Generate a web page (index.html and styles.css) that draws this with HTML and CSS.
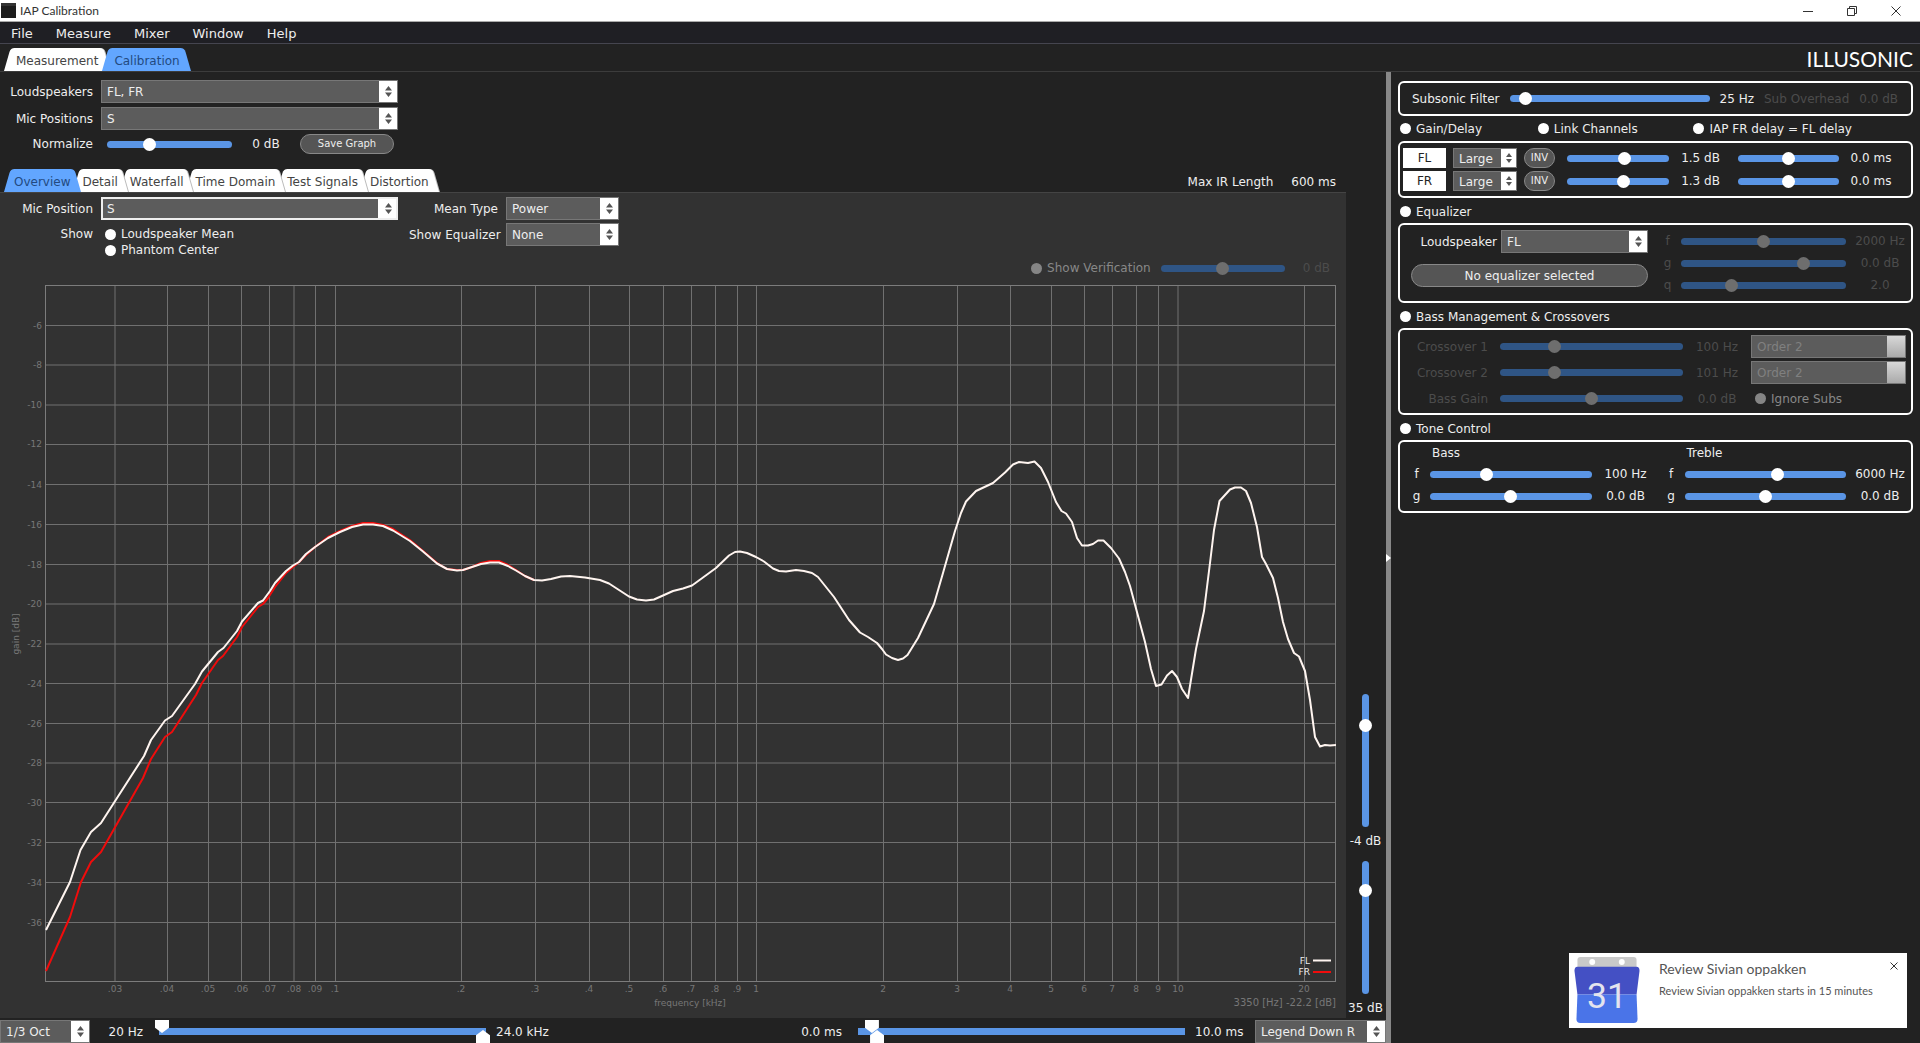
FILE: index.html
```html
<!DOCTYPE html>
<html lang="en">
<head>
  <meta charset="UTF-8">
  <title>IAP Calibration</title>
  <link rel="stylesheet" href="styles.css">
</head>
<body>

<header class="titlebar">
  <span class="app-icon"></span>
  <span class="app-title">IAP Calibration</span>
  <button class="win-btn" aria-label="Minimize"><svg width="10" height="10"><path d="M0 5.5h10"/></svg></button>
  <button class="win-btn" aria-label="Restore"><svg width="10" height="10"><path d="M.5 2.5h7v7h-7zM2.5 2.5v-2h7v7h-2"/></svg></button>
  <button class="win-btn" aria-label="Close"><svg width="10" height="10"><path d="M.5 .5l9 9M9.500 .5l-9 9"/></svg></button>
</header>

<nav class="menubar">
  <a href="#">File</a>
  <a href="#">Measure</a>
  <a href="#">Mixer</a>
  <a href="#">Window</a>
  <a href="#">Help</a>
</nav>

<div class="topbar">
  <div class="tabs">
    <button class="tab">Measurement</button>
    <button class="tab active">Calibration</button>
  </div>
  <span class="brand">ILLUSONIC</span>
</div>

<main class="main">
  <section class="left">
    <div class="setup">
      <label for="speakers">Loudspeakers</label>
      <span class="drop"><select id="speakers"><option>FL, FR</option></select></span>
      <label for="mics">Mic Positions</label>
      <span class="drop"><select id="mics"><option>S</option></select></span>
      <label for="normalize">Normalize</label>
      <div class="normalize">
        <input id="normalize" type="range" min="0" max="100" value="32">
        <span class="value">0 dB</span>
        <button class="pill">Save Graph</button>
      </div>
    </div>

    <div class="subtabs">
      <div class="tabs stacked">
        <button class="tab active">Overview</button>
        <button class="tab">Detail</button>
        <button class="tab">Waterfall</button>
        <button class="tab">Time Domain</button>
        <button class="tab">Test Signals</button>
        <button class="tab">Distortion</button>
      </div>
      <div class="ir-length"><span>Max IR Length</span><span>600 ms</span></div>
    </div>

    <div class="work">
      <div class="overview">
        <div class="options">
          <div class="opt-grid">
            <label for="mic">Mic Position</label>
            <span class="drop focus"><select id="mic"><option>S</option></select></span>
            <span class="opt-label">Show</span>
            <div class="checks">
              <label class="check"><input type="checkbox">Loudspeaker Mean</label>
              <label class="check"><input type="checkbox">Phantom Center</label>
            </div>
          </div>
          <div class="opt-grid narrow">
            <label for="mean">Mean Type</label>
            <span class="drop"><select id="mean"><option>Power</option></select></span>
            <label for="showeq">Show Equalizer</label>
            <span class="drop"><select id="showeq"><option>None</option></select></span>
          </div>
        </div>

        <div class="verify">
          <label class="check off"><input type="checkbox" disabled>Show Verification</label>
          <input type="range" min="0" max="100" value="50" disabled aria-label="Verification gain">
          <span class="dim">0 dB</span>
        </div>

        <svg class="plot" viewBox="0 278 1346 740">
          <!-- grid -->
          <path class="grid" d="M45 325.500H1336M45 365H1336M45 405H1336M45 444.500H1336M45 484.500H1336M45 524.500H1336M45 564.500H1336M45 604H1336M45 644H1336M45 683.500H1336M45 723.500H1336M45 763H1336M45 802.500H1336M45 842.500H1336M45 882.500H1336M45 922.500H1336"/>
          <path class="grid" d="M115 285V981M167.500 285V981M208.500 285V981M241.500 285V981M269.500 285V981M294 285V981M315.500 285V981M335.500 285V981M461.500 285V981M535.500 285V981M589.500 285V981M629.500 285V981M663.500 285V981M691.500 285V981M715.500 285V981M737.500 285V981M756.500 285V981M883.500 285V981M957.500 285V981M1010.500 285V981M1051.500 285V981M1084.500 285V981M1112.500 285V981M1136.500 285V981M1158.500 285V981M1178 285V981M1304.500 285V981"/>
          <rect class="frame" x="45.500" y="285.500" width="1290" height="696"/>

          <!-- responses -->
          <polyline class="fr" points="46,971 70,917 81,882 91,862 101,852 143,778 151,759 165,737 172,732 196,695 202,683 218,660 223,656 237,637 242,627 258,607 263,604 268,598 275,587 286,573 293,567 299,562 306,555 315,547 328,537 340,531 352,526 363,523 373,523 383,525 393,529 410,540 423,551 437,563 447,569 457,570 463,570 472,567 481,563 490,561 499,561 508,565 516,570 525,576 534,580"/>
          <polyline class="fl" points="46,930 70,882 80.5,850 91,832 101,823 144,756 151,740 165,720.5 172,716 195,684 202,671.5 218,652 223.5,648 237,631 242,621.5 258,603 263,600.5 270,591 275,583 286,571 293,565.5 299,562 306,554 315,547 328,538 340,532 352,527 363,524.5 373,524.5 383,526 393,530.5 410,541 423,551.5 437,563.5 447,569 457,570.5 463,570 472,567 481,564 490,562.5 499,562.5 508,566 516,570.5 525,576 534,580 542,580.5 551,579 561,576.5 570,576 585,577.5 600,580 609,583.5 619,590 629,596.5 637,599.5 646,600.5 654,599.5 663,595.5 673,591 683,588.5 692,585.5 703,577.5 716,568 729,555.5 735,552 740,551.5 747,553 756,557 764,561.5 773,568.5 779,571 786,571.5 796,570 804,571 812,573 818,577 834,597 849,620 860,632.5 868,637 877,643 882,649 886,654.5 892,658 898,660 903,658.5 907.5,655 918,638 934,604 943,573 955,531 961,513 966,501.5 976,491 993,483 1005,472.5 1013,464.5 1019,462 1028,463 1034.5,461.5 1041,468 1048,482 1056,502 1061.5,511 1066,513.5 1072,522 1077,538 1082,545.5 1088,545.5 1093,544 1098,540.5 1103.5,540.5 1111,548 1119,558.5 1125,572 1130,586 1145,642 1151,669 1156,686 1161.5,684.5 1167,675.5 1172,671 1177,677 1182,689 1188,698 1196,649 1204,611 1210,563 1214,530 1219.5,501 1230,489.5 1235,487.5 1241,487.5 1246,491 1251,503 1257,527 1262,557 1266,564 1273,578 1278,598 1283,622 1288,639 1294,653 1299,656.5 1305,671 1310,700 1315,737 1320,746.5 1325,745 1330,745.5 1336,745"/>

          <!-- gain axis -->
          <g class="axis" text-anchor="end">
            <text x="42" y="329">-6</text>
            <text x="42" y="368">-8</text>
            <text x="42" y="408">-10</text>
            <text x="42" y="447">-12</text>
            <text x="42" y="488">-14</text>
            <text x="42" y="528">-16</text>
            <text x="42" y="568">-18</text>
            <text x="42" y="607">-20</text>
            <text x="42" y="647">-22</text>
            <text x="42" y="687">-24</text>
            <text x="42" y="727">-26</text>
            <text x="42" y="766">-28</text>
            <text x="42" y="806">-30</text>
            <text x="42" y="846">-32</text>
            <text x="42" y="886">-34</text>
            <text x="42" y="926">-36</text>
          </g>
          <!-- frequency axis -->
          <g class="axis" text-anchor="middle">
            <text x="115" y="992">.03</text>
            <text x="167" y="992">.04</text>
            <text x="208" y="992">.05</text>
            <text x="241" y="992">.06</text>
            <text x="269" y="992">.07</text>
            <text x="294" y="992">.08</text>
            <text x="315" y="992">.09</text>
            <text x="335" y="992">.1</text>
            <text x="461" y="992">.2</text>
            <text x="535" y="992">.3</text>
            <text x="589" y="992">.4</text>
            <text x="629" y="992">.5</text>
            <text x="663" y="992">.6</text>
            <text x="691" y="992">.7</text>
            <text x="715" y="992">.8</text>
            <text x="737" y="992">.9</text>
            <text x="756" y="992">1</text>
            <text x="883" y="992">2</text>
            <text x="957" y="992">3</text>
            <text x="1010" y="992">4</text>
            <text x="1051" y="992">5</text>
            <text x="1084" y="992">6</text>
            <text x="1112" y="992">7</text>
            <text x="1136" y="992">8</text>
            <text x="1158" y="992">9</text>
            <text x="1178" y="992">10</text>
            <text x="1304" y="992">20</text>
            <text x="690" y="1006">frequency [kHz]</text>
            <text transform="translate(19 634) rotate(-90)">gain [dB]</text>
          </g>
          <text class="axis readout" x="1336" y="1006" text-anchor="end">3350 [Hz] -22.2 [dB]</text>

          <!-- legend -->
          <g class="legend" text-anchor="end">
            <text x="1310" y="964">FL</text>
            <text x="1310" y="975">FR</text>
            <path class="fl" d="M1313 960.500h18"/>
            <path class="fr" d="M1313 972h18"/>
          </g>
        </svg>
      </div>

      <div class="side">
        <input class="vert" type="range" min="0" max="100" value="79" aria-label="Top level">
        <span>-4 dB</span>
        <input class="vert" type="range" min="0" max="100" value="81" aria-label="Range">
        <span>35 dB</span>
      </div>
    </div>

    <footer class="bottombar">
      <span class="drop smooth"><select aria-label="Smoothing"><option>1/3 Oct</option></select></span>
      <span class="from">20 Hz</span>
      <div class="span">
        <input class="low" type="range" min="0" max="100" value="0" aria-label="Lowest frequency">
        <input class="high" type="range" min="0" max="100" value="100" aria-label="Highest frequency">
      </div>
      <span class="to">24.0 kHz</span>
      <span class="from time">0.0 ms</span>
      <div class="span">
        <input class="low" type="range" min="0" max="1000" value="34" aria-label="Window start">
        <input class="high" type="range" min="0" max="1000" value="50" aria-label="Window end">
      </div>
      <span class="to">10.0 ms</span>
      <span class="drop legend-pos"><select aria-label="Legend"><option>Legend Down R</option></select></span>
    </footer>
  </section>

  <div class="splitter"></div>

  <aside class="right">
    <div class="box subsonic">
      <label for="subsonic">Subsonic Filter</label>
      <input id="subsonic" type="range" min="0" max="100" value="5">
      <span>25 Hz</span>
      <span class="dim">Sub Overhead</span>
      <span class="dim">0.0 dB</span>
    </div>

    <div class="heading delays">
      <label class="check"><input type="checkbox">Gain/Delay</label>
      <label class="check"><input type="checkbox">Link Channels</label>
      <label class="check"><input type="checkbox">IAP FR delay = FL delay</label>
    </div>
    <div class="box gains">
      <div class="channel">
        <button class="name">FL</button>
        <span class="drop"><select aria-label="FL size"><option>Large</option></select></span>
        <button class="pill">INV</button>
        <input type="range" min="0" max="100" value="58" aria-label="FL gain">
        <span class="value">1.5 dB</span>
        <input type="range" min="0" max="100" value="50" aria-label="FL delay">
        <span class="value">0.0 ms</span>
      </div>
      <div class="channel">
        <button class="name">FR</button>
        <span class="drop"><select aria-label="FR size"><option>Large</option></select></span>
        <button class="pill">INV</button>
        <input type="range" min="0" max="100" value="57" aria-label="FR gain">
        <span class="value">1.3 dB</span>
        <input type="range" min="0" max="100" value="50" aria-label="FR delay">
        <span class="value">0.0 ms</span>
      </div>
    </div>

    <div class="heading">
      <label class="check"><input type="checkbox">Equalizer</label>
    </div>
    <div class="box equalizer">
      <div class="eq-pick">
        <div class="eq-speaker">
          <label for="eqspeaker">Loudspeaker</label>
          <span class="drop"><select id="eqspeaker"><option>FL</option></select></span>
        </div>
        <button class="pill">No equalizer selected</button>
      </div>
      <div class="knobs dim">
        <label for="eqf">f</label>
        <input id="eqf" type="range" min="0" max="100" value="50" disabled>
        <span class="value">2000 Hz</span>
        <label for="eqg">g</label>
        <input id="eqg" type="range" min="0" max="100" value="76" disabled>
        <span class="value">0.0 dB</span>
        <label for="eqq">q</label>
        <input id="eqq" type="range" min="0" max="100" value="29" disabled>
        <span class="value">2.0</span>
      </div>
    </div>

    <div class="heading">
      <label class="check"><input type="checkbox">Bass Management &amp; Crossovers</label>
    </div>
    <div class="box crossovers dim">
      <label for="xo1">Crossover 1</label>
      <input id="xo1" type="range" min="0" max="100" value="28" disabled>
      <span class="value">100 Hz</span>
      <span class="drop off"><select aria-label="Crossover 1 order" disabled><option>Order 2</option></select></span>
      <label for="xo2">Crossover 2</label>
      <input id="xo2" type="range" min="0" max="100" value="28" disabled>
      <span class="value">101 Hz</span>
      <span class="drop off"><select aria-label="Crossover 2 order" disabled><option>Order 2</option></select></span>
      <label for="bassgain">Bass Gain</label>
      <input id="bassgain" type="range" min="0" max="100" value="50" disabled>
      <span class="value">0.0 dB</span>
      <label class="check off"><input type="checkbox" disabled>Ignore Subs</label>
    </div>

    <div class="heading">
      <label class="check"><input type="checkbox">Tone Control</label>
    </div>
    <div class="box tone">
      <div>
        <div class="tone-title">Bass</div>
        <div class="knobs">
          <label for="bassf">f</label>
          <input id="bassf" type="range" min="0" max="100" value="34">
          <span class="value">100 Hz</span>
          <label for="bassg">g</label>
          <input id="bassg" type="range" min="0" max="100" value="50">
          <span class="value">0.0 dB</span>
        </div>
      </div>
      <div>
        <div class="tone-title">Treble</div>
        <div class="knobs">
          <label for="trebf">f</label>
          <input id="trebf" type="range" min="0" max="100" value="58">
          <span class="value">6000 Hz</span>
          <label for="trebg">g</label>
          <input id="trebg" type="range" min="0" max="100" value="50">
          <span class="value">0.0 dB</span>
        </div>
      </div>
    </div>
  </aside>
</main>

<div class="toast">
  <svg class="calendar" width="66" height="67" viewBox="0 0 66 68">
    <path d="M6 0h54a3 3 0 0 1 3 3v10H3V3a3 3 0 0 1 3-3z" fill="#c9c9c9"/>
    <circle cx="18" cy="5" r="3" fill="#fff"/>
    <circle cx="48" cy="5" r="3" fill="#fff"/>
    <path d="M3 10h60q3 0 3 4l-3 24H3L0 14q0-4 3-4z" fill="#4450c4"/>
    <path d="M3 38h60l1 25q0 4-4 4H6q-4 0-4-4z" fill="#4a74e8"/>
    <text x="33" y="52" text-anchor="middle">31</text>
  </svg>
  <div class="toast-text">
    <div class="toast-title">Review Sivian oppakken</div>
    <div>Review Sivian oppakken starts in 15 minutes</div>
  </div>
  <button class="toast-close" aria-label="Close"><svg width="8" height="8"><path d="M.5 .5l7 7M7.500 .5l-7 7"/></svg></button>
</div>

</body>
</html>
```
FILE: styles.css
```css
* { box-sizing: border-box; }
body { margin: 0; min-height: 100vh; display: flex; flex-direction: column; background: #222; color: #eee; font: 12px/16px "DejaVu Sans", Verdana, sans-serif; }
button, select, input { font: inherit; color: inherit; margin: 0; }
button { border: 0; padding: 0; background: none; }
a { color: inherit; text-decoration: none; }

/* window chrome */
.titlebar { display: flex; align-items: center; height: 22px; background: #fff; color: #333; border-bottom: 1px solid #aaa; }
.app-icon { width: 15px; height: 15px; margin: 0 4px 0 1px; background: #1c1c1c; border-top: 3px solid #333; }
.app-title { flex: 1; font: 12px/16px Lato, "Noto Sans", sans-serif; }
.win-btn { width: 44px; height: 20px; display: flex; align-items: center; justify-content: center; }
.win-btn:last-child { margin-right: 2px; }
.win-btn svg, .toast-close svg { fill: none; stroke: #333; }
.menubar { display: flex; align-items: center; gap: 23px; height: 22px; padding: 2px 0 0 11px; background: #1f1f24; border-bottom: 1px solid #45454f; font-size: 13px; }

/* tabs */
.topbar { display: flex; justify-content: space-between; height: 28px; border-bottom: 1px solid #3c3c3c; }
.tabs { display: flex; align-items: flex-end; padding-left: 4px; }
.tab { position: relative; isolation: isolate; height: 23px; padding: 3px 12px 0; color: #444; }
.tab + .tab { margin-left: -8px; }
.tab::before, .tab::after { content: ""; position: absolute; z-index: -1; top: 0; bottom: 0; width: 52%; background: #fff; }
.tab::before { left: 0; border-radius: 4px 0 0 0; transform: skewX(-16deg); transform-origin: bottom; }
.tab::after { right: 0; border-radius: 0 4px 0 0; transform: skewX(16deg); transform-origin: bottom; box-shadow: 1px 0 0 #bbb; }
.tab.active { z-index: 10; color: #234a80; }
.tab.active::before, .tab.active::after { background: #62a6ff; box-shadow: none; }
.stacked .tab { padding: 3px 10px 0; }
.stacked .tab:nth-child(2) { z-index: 5; }
.stacked .tab:nth-child(3) { z-index: 4; }
.stacked .tab:nth-child(4) { z-index: 3; }
.stacked .tab:nth-child(5) { z-index: 2; }
.brand { padding-right: 7px; color: #fff; font: 21px/30px "Liberation Sans Narrow", Lato, sans-serif; }

/* controls */
input[type=range] { appearance: none; width: 100%; min-width: 0; height: 14px; background: none; }
input[type=range]::-webkit-slider-runnable-track { height: 7px; border-radius: 4px; background: #5a95e5; }
input[type=range]::-webkit-slider-thumb { appearance: none; width: 13px; height: 13px; margin-top: -3px; border-radius: 50%; background: #fff; }
input[type=range]:disabled::-webkit-slider-runnable-track { background: #2f5585; }
input[type=range]:disabled::-webkit-slider-thumb { background: #6e6e6e; }
input[type=checkbox] { appearance: none; width: 11px; height: 11px; flex: none; border-radius: 50%; background: #fff; }
input[type=checkbox]:disabled { background: #858585; }
.check { display: flex; align-items: center; gap: 5px; }
.check.off { color: #888; }
.drop { position: relative; display: flex; height: 23px; }
.drop select { appearance: none; flex: 1; min-width: 0; padding: 1px 20px 0 5px; border: 1px solid #777; border-radius: 0; background: linear-gradient(#fff, #fff) right / 18px 100% no-repeat #5c5c5c; color: #eee; opacity: 1; }
.drop::after { content: ""; position: absolute; right: 6px; top: 6px; width: 7px; height: 11px; background: #555; clip-path: polygon(50% 0, 100% 40%, 0 40%, 0 60%, 100% 60%, 50% 100%, 0 60%, 0 40%); pointer-events: none; }
.drop.focus select { border: 2px solid #eee; padding-left: 4px; }
.drop.off::after { display: none; }
.drop.off select { color: #808080; background-image: linear-gradient(#d8d8d8, #aaa); }
.pill { height: 20px; border: 1px solid #888; border-radius: 12px; background: #555; font-size: 10px; }
.dim { color: #4c4c4c; }

/* columns */
.main { flex: 1; display: grid; grid-template-columns: minmax(0, 1fr) 5px 529px; }
.left { display: flex; flex-direction: column; }
.setup { display: grid; grid-template-columns: 93px 297px; grid-template-rows: 23px 23px 20px; gap: 4px 8px; align-items: center; padding-top: 8px; }
.setup > label, .opt-grid > label, .opt-label { text-align: right; white-space: nowrap; }
.normalize { display: flex; align-items: center; padding: 0 4px 0 6px; }
.normalize input[type=range] { width: 125px; }
.normalize .value { width: 68px; text-align: center; }
.normalize .pill { flex: 1; }
.subtabs { display: flex; justify-content: space-between; height: 38px; }
.ir-length { display: flex; gap: 18px; align-items: flex-end; padding: 0 50px 2px 0; }
.work { flex: 1; display: flex; }
.overview { flex: 1; min-width: 0; background: #323232; border-top: 1px solid #444; }
.options { display: flex; gap: 11px; padding-top: 4px; }
.opt-grid { display: grid; grid-template-columns: 93px 297px; gap: 4px 8px; align-content: start; align-items: center; }
.opt-grid.narrow { grid-template-columns: 89px 113px; gap: 3px 8px; }
.opt-label { align-self: start; padding-top: 2px; }
.checks { padding: 2px 0 0 4px; }
.verify { display: flex; align-items: center; gap: 10px; height: 20px; padding-right: 16px; justify-content: flex-end; }
.verify input[type=range] { width: 124px; }
.verify .dim { padding-left: 8px; }

/* plot */
.plot { display: block; width: 100%; height: auto; font-size: 9px; }
.plot .grid { fill: none; stroke: #707070; }
.plot .frame { fill: none; stroke: #7c7c7c; }
.plot .axis { fill: #777; }
.plot .readout { font-size: 10px; }
.plot .legend { fill: #eee; }
.plot .fl, .plot .fr { fill: none; stroke-width: 2; stroke-linejoin: round; }
.plot .fl { stroke: #fff5f0; }
.plot .fr { stroke: #f00c0c; }

.side { width: 39px; margin-right: 1px; display: flex; flex-direction: column; justify-content: flex-end; align-items: center; gap: 6px; padding-bottom: 2px; }
.side span { white-space: nowrap; padding-bottom: 6px; }
.side span:last-child { padding: 0; }
input[type=range].vert { writing-mode: vertical-lr; direction: rtl; width: 14px; height: 133px; }
input.vert::-webkit-slider-runnable-track { width: 7px; height: 100%; }
input.vert::-webkit-slider-thumb { margin: 0 0 0 -3px; }

.bottombar { display: flex; align-items: center; height: 25px; padding-top: 2px; }
.smooth { width: 90px; }
.legend-pos { width: 131px; }
.from { width: 69px; padding-right: 16px; text-align: right; }
.from.time { flex: 1; }
.to { width: 70px; padding-left: 10px; }
/* two-handle slider: both inputs share one grid cell */
.span { display: grid; width: 327px; height: 23px; }
.span input[type=range] { grid-area: 1 / 1; width: auto; height: 23px; margin: 0 -4px; pointer-events: none; }
.span input.low::-webkit-slider-runnable-track { height: 23px; border-radius: 0; background: linear-gradient(#5a95e5, #5a95e5) center / calc(100% - 8px) 7px no-repeat; }
.span input.high::-webkit-slider-runnable-track { height: 23px; background: none; }
.span input::-webkit-slider-thumb { width: 14px; height: 13px; margin-top: 0; border-radius: 0; clip-path: polygon(0 0, 100% 0, 100% 60%, 50% 100%, 0 60%); pointer-events: auto; }
.span .high::-webkit-slider-thumb { margin-top: 10px; clip-path: polygon(50% 0, 100% 40%, 100% 100%, 0 100%, 0 40%); }

.splitter { background: #888; display: flex; align-items: center; }
.splitter::after { content: ""; border: 4px solid transparent; border-left: 5px solid #fff; border-right: 0; }

/* right panel */
.right { padding: 9px 7px; }
.box { border: 2px solid #fff; border-radius: 6px; }
.heading { height: 25px; padding: 2px 2px 0; display: flex; align-items: center; }
.value { text-align: center; white-space: nowrap; }
.subsonic { display: flex; align-items: center; gap: 10px; height: 35px; padding: 0 13px 0 12px; white-space: nowrap; }
.subsonic input { flex: 1; }
.delays { justify-content: space-between; padding: 0 61px 0 2px; }
.gains { display: grid; gap: 3px; height: 57px; padding: 5px 15px 0 3px; align-content: start; }
.channel { display: grid; grid-template-columns: 43px 64px 31px 1fr 50px 1fr 50px; column-gap: 7px; align-items: center; }
.channel input[type=range] { width: auto; margin-left: 5px; }
.channel .name { height: 20px; background: #fff; color: #222; }
.channel .drop, .channel .pill { height: 20px; }
.channel .drop select { background-size: 15px 100%; padding-right: 15px; }
.channel .drop::after { right: 5px; top: 5px; width: 6px; height: 10px; }
.equalizer { display: grid; grid-template-columns: 237px 1fr; gap: 15px; height: 80px; padding: 5px 6px 0 11px; }
.eq-speaker { display: grid; grid-template-columns: 1fr 147px; gap: 4px; align-items: center; text-align: right; margin-bottom: 11px; }
.eq-pick .pill { width: 100%; height: 23px; font-size: 12px; }
.knobs { display: grid; grid-template-columns: 9px 1fr 50px; grid-auto-rows: 22px; column-gap: 9px; align-items: center; text-align: center; }
.crossovers { display: grid; grid-template-columns: 76px 183px 44px 1fr; grid-auto-rows: 23px; gap: 3px 12px; align-items: center; height: 87px; padding: 5px 5px 0 12px; text-align: right; }
.crossovers .check { padding-left: 4px; }
.tone { display: grid; grid-template-columns: 1fr 1fr; gap: 16px; height: 73px; padding: 1px 6px 0 12px; }
.tone-title { padding-left: 20px; line-height: 20px; }

/* calendar reminder */
.toast { position: fixed; right: 13px; bottom: 15px; width: 338px; height: 75px; display: flex; padding: 4px 5px; background: #fff; color: #555; font: 11px/16px Lato, "Noto Sans", sans-serif; }
.calendar { flex: none; }
.calendar text { fill: #e4e4ee; font: 36px Roboto, sans-serif; }
.toast-text { flex: 1; padding: 3px 0 0 19px; white-space: nowrap; }
.toast-title { font-size: 14px; line-height: 18px; margin-bottom: 5px; }
.toast-close { align-self: flex-start; padding: 1px 4px; }
```
